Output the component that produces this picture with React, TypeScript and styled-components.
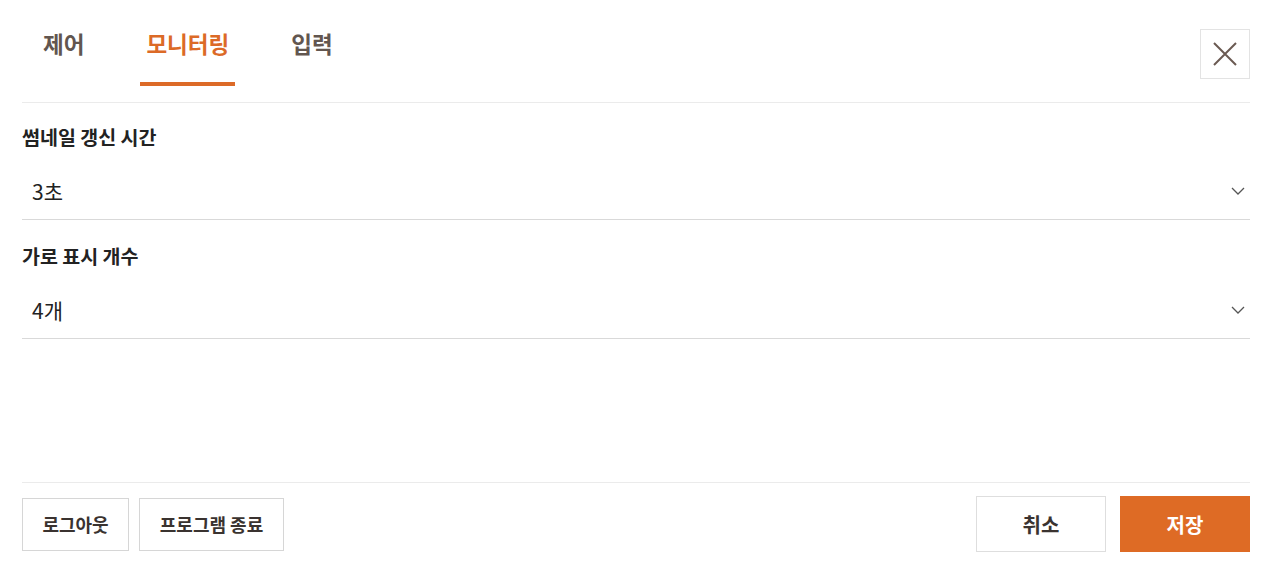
import styled, { createGlobalStyle } from 'styled-components';

const GlobalStyle = createGlobalStyle`
    html, body {
        margin: 0;
        padding: 0;
        background: #ffffff;
    }
    body {
        font-family: "Noto Sans CJK KR", "Noto Sans", sans-serif;
        color: #222222;
    }
    * {
        box-sizing: border-box;
    }
`;

const Page = styled.div`
    display: flex;
    flex-direction: column;
    height: 576px;
    padding: 0 30px 0 22px;
`;

const Header = styled.div`
    display: flex;
    flex-direction: row;
    align-items: flex-start;
    justify-content: space-between;
    height: 103px;
    border-bottom: 1px solid #ebebeb;
`;

const Tabs = styled.div`
    display: flex;
    flex-direction: row;
    gap: 50px;
    padding-left: 15px;
`;

const Tab = styled.button<{ $active?: boolean }>`
    padding: 28px 6px 24px;
    margin: 0;
    border: none;
    border-bottom: 4px solid ${p => (p.$active ? '#dc6a27' : 'transparent')};
    background: none;
    font-family: inherit;
    font-size: 22.5px;
    font-weight: 700;
    line-height: 30px;
    color: ${p => (p.$active ? '#dc6a27' : '#62564f')};
    cursor: pointer;
`;

const CloseButton = styled.button`
    display: flex;
    align-items: center;
    justify-content: center;
    margin-top: 29px;
    width: 50px;
    height: 50px;
    padding: 0;
    border: 1px solid #e3e3e3;
    background: #fff;
    cursor: pointer;
`;

const Body = styled.div`
    flex: 1;
    display: flex;
    flex-direction: column;
`;

const Field = styled.div`
    display: flex;
    flex-direction: column;
    margin-top: 22px;
    & + & {
        margin-top: 24px;
    }
`;

const Label = styled.div`
    font-size: 19.5px;
    font-weight: 700;
    line-height: 24px;
    color: #222;
`;

const Select = styled.div`
    display: flex;
    flex-direction: row;
    align-items: center;
    justify-content: space-between;
    margin-top: 14px;
    height: 57px;
    padding: 0 5px 0 10px;
    border-bottom: 1px solid #d9d9d9;
    font-size: 21px;
    color: #222;
`;

const Footer = styled.div`
    display: flex;
    flex-direction: row;
    align-items: center;
    justify-content: space-between;
    border-top: 1px solid #ebebeb;
    padding: 13px 0 24px;
`;

const ButtonGroup = styled.div<{ $gap: number }>`
    display: flex;
    flex-direction: row;
    align-items: center;
    gap: ${p => p.$gap}px;
`;

const SmallButton = styled.button<{ $width: number }>`
    width: ${p => p.$width}px;
    height: 53px;
    border: 1px solid #d6d6d6;
    background: #fff;
    font-family: inherit;
    font-size: 18px;
    font-weight: 700;
    color: #3a3330;
    cursor: pointer;
`;

const ActionButton = styled.button<{ $primary?: boolean }>`
    width: 130px;
    height: 56px;
    border: 1px solid ${p => (p.$primary ? '#de6b25' : '#dedede')};
    background: ${p => (p.$primary ? '#de6b25' : '#fff')};
    font-family: inherit;
    font-size: 20px;
    font-weight: 700;
    color: ${p => (p.$primary ? '#fff' : '#3a3330')};
    cursor: pointer;
`;

const Chevron = () => (
    <svg width="14" height="8" viewBox="0 0 14 8" fill="none">
        <polyline points="1,1 7,7 13,1" stroke="#555" strokeWidth="1.3" />
    </svg>
);

const CloseIcon = () => (
    <svg width="24" height="24" viewBox="0 0 24 24" fill="none">
        <path d="M1 1 L23 23 M23 1 L1 23" stroke="#6b5a52" strokeWidth="2" />
    </svg>
);

export default function App() {
    return (
        <>
            <GlobalStyle />
            <Page>
                <Header>
                    <Tabs>
                        <Tab>제어</Tab>
                        <Tab $active>모니터링</Tab>
                        <Tab>입력</Tab>
                    </Tabs>
                    <CloseButton aria-label="닫기">
                        <CloseIcon />
                    </CloseButton>
                </Header>
                <Body>
                    <Field>
                        <Label>썸네일 갱신 시간</Label>
                        <Select>
                            <span>3초</span>
                            <Chevron />
                        </Select>
                    </Field>
                    <Field>
                        <Label>가로 표시 개수</Label>
                        <Select>
                            <span>4개</span>
                            <Chevron />
                        </Select>
                    </Field>
                </Body>
                <Footer>
                    <ButtonGroup $gap={10}>
                        <SmallButton $width={107}>로그아웃</SmallButton>
                        <SmallButton $width={145}>프로그램 종료</SmallButton>
                    </ButtonGroup>
                    <ButtonGroup $gap={14}>
                        <ActionButton>취소</ActionButton>
                        <ActionButton $primary>저장</ActionButton>
                    </ButtonGroup>
                </Footer>
            </Page>
        </>
    );
}
